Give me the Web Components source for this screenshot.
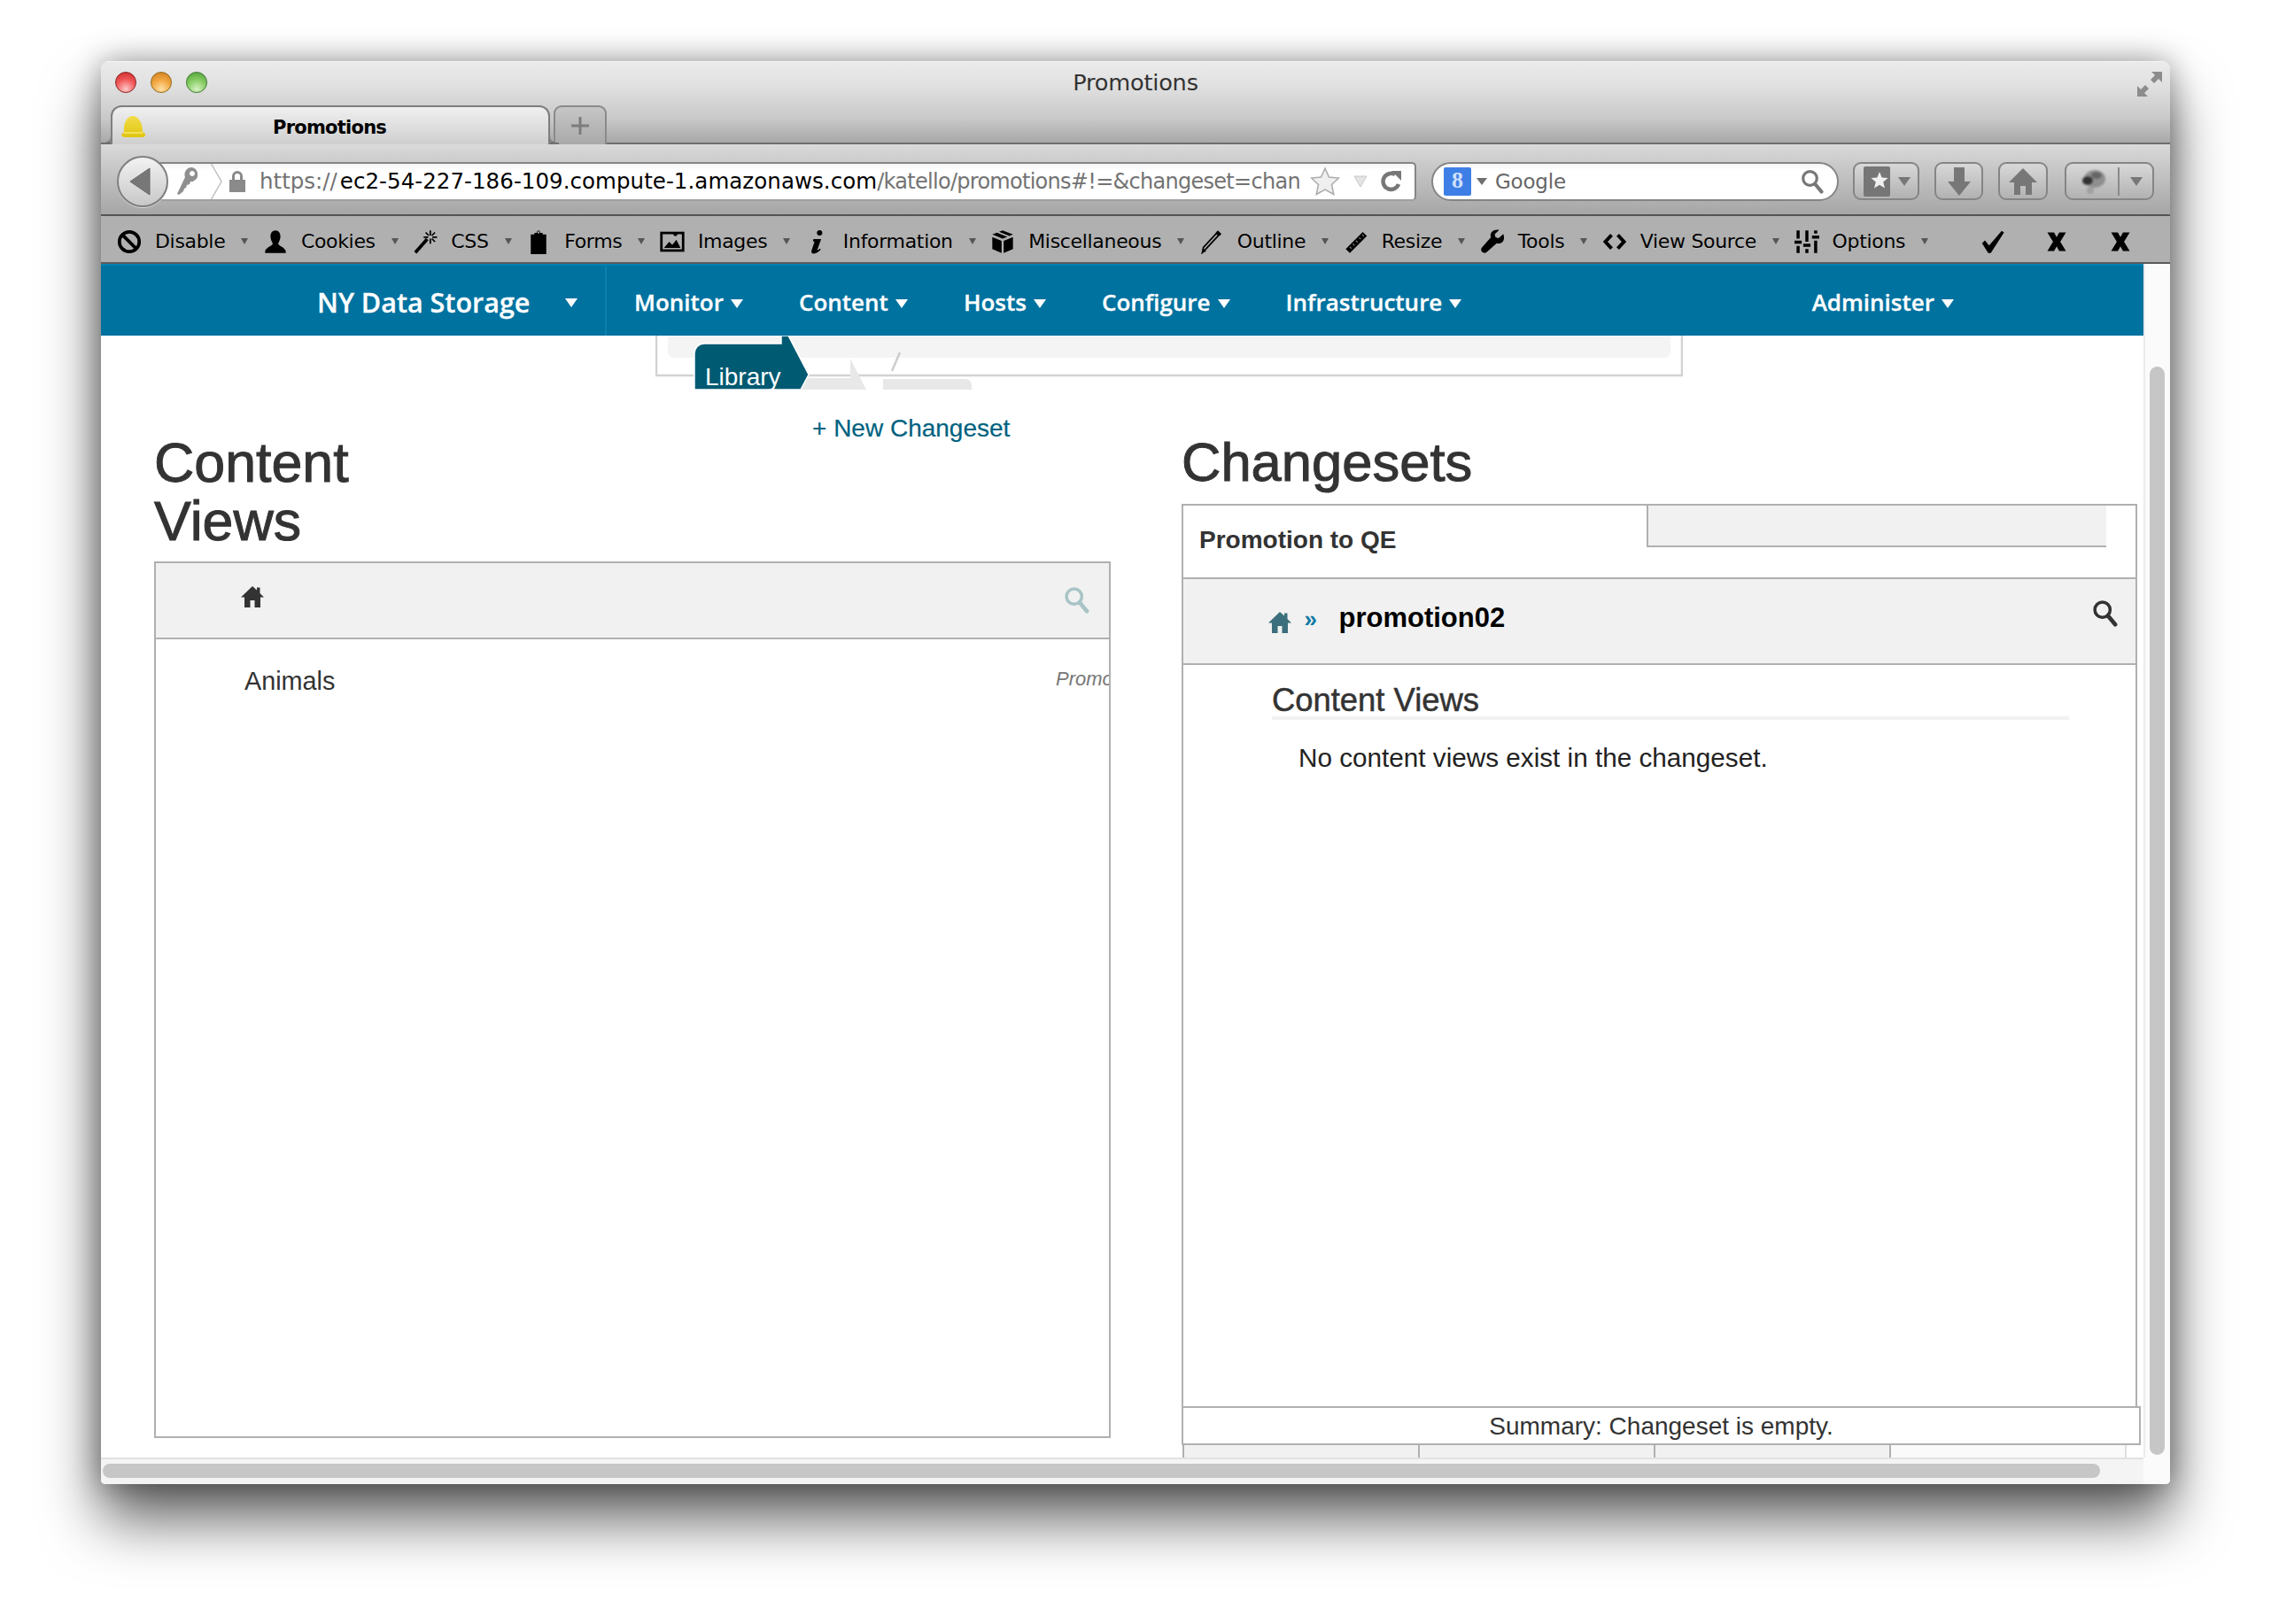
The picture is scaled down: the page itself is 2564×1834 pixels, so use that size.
<!DOCTYPE html>
<html><head><meta charset="utf-8"><title>Promotions</title>
<style>
html,body{margin:0;padding:0;background:#fff;width:2564px;height:1834px;overflow:hidden}
body{font-family:"Liberation Sans",Arial,sans-serif}
</style></head><body>
<mac-window>
  <title-bar></title-bar>
  <nav-toolbar></nav-toolbar>
  <dev-toolbar>
    <dev-item icon="disable">Disable</dev-item>
    <dev-item icon="person">Cookies</dev-item>
    <dev-item icon="wand">CSS</dev-item>
    <dev-item icon="clip">Forms</dev-item>
    <dev-item icon="image">Images</dev-item>
    <dev-item icon="info">Information</dev-item>
    <dev-item icon="box">Miscellaneous</dev-item>
    <dev-item icon="pencil">Outline</dev-item>
    <dev-item icon="ruler">Resize</dev-item>
    <dev-item icon="wrench">Tools</dev-item>
    <dev-item icon="code">View Source</dev-item>
    <dev-item icon="sliders">Options</dev-item>
  </dev-toolbar>
  <browser-viewport>
    <app-nav></app-nav>
    <env-path></env-path>
    <promo-layout>
      <content-panel slot="left"></content-panel>
      <changeset-panel slot="right"></changeset-panel>
    </promo-layout>
  </browser-viewport>
</mac-window>
<script>
const IC={
disable:'<circle cx="12" cy="12" r="9.6" fill="none" stroke="#000" stroke-width="3.2"/><path d="M5 5l14 14" stroke="#000" stroke-width="3.2"/>',
person:'<path d="M12 1c3.200 0 4.800 2.600 4.800 5.800 0 3-1.600 5.500-2.200 7 0 2.200 6.400 3.600 7.400 7.200v2H2v-2c1-3.600 7.400-5 7.400-7.200C8.800 12.300 7.200 9.800 7.200 6.800 7.200 3.600 8.800 1 12 1z"/>',
wand:'<path d="M2.500 22.500L14 9.500" stroke="#000" stroke-width="3.200" fill="none"/><path d="M17 1v5M17 9v5M10.500 7.500h4.500M19 7.500h4.500M12.500 3l3 3M21.500 3l-3 3M21.500 12l-3-3" stroke="#000" stroke-width="1.500" fill="none"/>',
clip:'<path fill-rule="evenodd" d="M4.500 5H8V3.500h2.300C10.500 1.800 11 1 12 1s1.500.8 1.700 2.500H16V5h3.500v19h-15zM11 3a1 1 0 1 0 2 0 1 1 0 0 0-2 0z"/>',
image:'<rect x="1.500" y="3.500" width="21" height="17" fill="none" stroke="#000" stroke-width="2.400"/><path d="M4 18l5-6 3 3 4-5 4 8zM15 6.500a2 2 0 1 1 .01 0z"/>',
info:'<circle cx="14" cy="3.500" r="2.600"/><path d="M8 9.500h7.500l-3.600 10c-.3 1 .6 1 2.400-.8l.9.9C12.800 22.400 10.500 23.500 8.500 23.500c-2 0-2.800-1.300-2.300-3l2.900-8.500-1.500-.5z"/>',
box:'<path d="M12 1l10 4-3.500 1.500L8.500 2.400zM6.500 3.200L16.500 7.300 12 9 2 5zM2 7.500l9 3.700V23l-9-4zM22 7.500l-9 3.700V23l9-4z"/>',
pencil:'<path d="M19 5.500L6.500 19 3 22.500l1-5L16.500 4z" fill="none" stroke="#000" stroke-width="1.500"/><path d="M18 1l3.500 3.500-2 2L16 3zM3 22.500l.8-4 3 3z"/>',
ruler:'<path d="M18.500 2.500l4 4L6 23l-4-4z"/><path d="M6 17l1.500 1.500M9 14l1.500 1.500M12 11l1.500 1.500M15 8l1.500 1.500M18 5l1.500 1.500" stroke="#888" stroke-width="1"/>',
wrench:'<path d="M22.500 4.500l-4.500 4-3-.8-.8-3 4.300-4C15.500 0 12.500.8 11 3c-1 1.500-1.100 3.200-.5 4.800L1.800 17.500c-1.100 1.300-1 3.200.2 4.400 1.200 1.200 3.100 1.300 4.400.2l9.700-8.700c1.600.6 3.300.5 4.800-.5 2.200-1.500 3-4.500 1.600-8.400z"/>',
code:'<path d="M9 5.500L3 12l6 6.500M15 5.500l6 6.500-6 6.500" fill="none" stroke="#000" stroke-width="3.400"/>',
sliders:'<path d="M2 1h3v8H2zM0 11h7v3H0zM2 16h3v7H2zM10.500 1h3v11h-3zM8.500 14h7v3h-7zM10.500 19h3v4h-3zM19 1h3v3h-3zM17 6h7v3h-7zM19 11h3v12h-3z"/>'
};
const SEARCH=(c,w=26,h=28)=>`<svg width="${w}" height="${h}" viewBox="0 0 26 28"><circle cx="10.500" cy="10.500" r="7.800" fill="none" stroke="${c}" stroke-width="3.200"/><path d="M16 16.500l7.500 9" stroke="${c}" stroke-width="4.200" stroke-linecap="round"/></svg>`;
const HOME=(c,w=28,h=26)=>`<svg width="${w}" height="${h}" viewBox="0 0 28 26"><path fill="${c}" d="M14 1L1 13.500h4V25h6.500v-8h5v8H23V13.500h4L22.500 9V2.500H19v3z"/></svg>`;
function def(name,html){customElements.define(name,class extends HTMLElement{constructor(){super();this.attachShadow({mode:'open'}).innerHTML=html}})}

def('mac-window',`<style>
:host{display:flex;flex-direction:column;width:2336px;height:1607px;margin:69px 0 0 114px;border-radius:9px 9px 5px 5px;background:#fff;box-shadow:0 40px 66px rgba(0,0,0,.62),0 0 34px rgba(0,0,0,.36);overflow:hidden;position:relative}
</style><slot></slot>`);

def('title-bar',`<style>
:host{display:block;height:94px;box-sizing:border-box;background:linear-gradient(#ebebeb,#e0e0e0 30%,#c9c9c9 70%,#a8a8a8);border-top:1px solid #f6f6f6;border-bottom:2px solid #6e6e6e;font-family:"DejaVu Sans",sans-serif}
.row{display:grid;grid-template-columns:1fr auto 1fr;align-items:center;height:49px}
.lights{display:flex;gap:16px;padding-left:16px;padding-bottom:3px}
.l{width:24px;height:24px;border-radius:50%;box-sizing:border-box}
.r{background:radial-gradient(circle at 50% 85%,#ffc9c9,#f25a5a 50%,#c42626);border:1px solid #8a2626}
.o{background:radial-gradient(circle at 50% 85%,#ffe0a6,#f2a640 50%,#c77a18);border:1px solid #8f6a20}
.g{background:radial-gradient(circle at 50% 85%,#d8f2c4,#86cc62 50%,#4d9a38);border:1px solid #3f7a30}
.t{font-size:25.600px;color:#333;letter-spacing:-.2px;padding-bottom:3px}
.e{justify-self:end;padding-right:8px;display:flex}
.tabs{display:flex;height:44px;padding-left:11px;gap:4px;margin-bottom:-2px}
.tab{position:relative;width:496px;height:46px;box-sizing:border-box;background:linear-gradient(#f0f0f0,#cdcdcd);border:2px solid #7e7e7e;border-bottom:0;border-radius:12px 12px 0 0;display:flex;align-items:center}
.tab::before,.tab::after{content:"";position:absolute;bottom:2px;width:10px;height:14px;border-bottom:2px solid #6e6e6e}
.tab::before{left:-12px;border-right:2px solid #7e7e7e;border-bottom-right-radius:9px}
.tab::after{right:-12px;border-left:2px solid #7e7e7e;border-bottom-left-radius:9px}
.tab b{position:absolute;left:181px;top:9px;font-size:21px;letter-spacing:-.75px;color:#000;line-height:28px}
.fav{margin-left:9px;display:flex}
.plus{width:60px;height:44px;box-sizing:border-box;background:linear-gradient(#c6c6c6,#a9a9a9);border:2px solid #8a8a8a;border-bottom:0;border-radius:9px 9px 0 0;display:flex;align-items:center;justify-content:center}
</style>
<div class="row"><div class="lights"><div class="l r"></div><div class="l o"></div><div class="l g"></div></div>
<div class="t">Promotions</div>
<div class="e"><svg width="30" height="30" viewBox="0 0 30 30" fill="#8c8c8c"><path d="M29 1v12l-4-4-5 5-4-4 5-5-4-4zM1 29V17l4 4 5-5 4 4-5 5 4 4z"/></svg></div></div>
<div class="tabs"><div class="tab"><div class="fav"><svg width="30" height="28" viewBox="0 0 30 28"><defs><linearGradient id="h" x1="0" y1="0" x2="0" y2="1"><stop offset="0" stop-color="#f2dc4a"/><stop offset="1" stop-color="#e0c510"/></linearGradient></defs><path fill="url(#h)" d="M4 20C3 9 8 2 14 2s11 7 11 18l3 2c1 1-1 4-3 4H5c-3 0-5-3-3-4z"/><path d="M4 21h21" stroke="#f7e96e" stroke-width="1.500"/></svg></div><b>Promotions</b></div>
<div class="plus"><svg width="22" height="22" viewBox="0 0 22 22"><path d="M9.500 1h3v8.500H21v3h-8.500V21h-3v-8.500H1v-3h8.500z" fill="#7c7c7c"/></svg></div></div>`);

def('nav-toolbar',`<style>
:host{display:flex;align-items:center;height:81px;box-sizing:border-box;padding:4px 19px 0 18px;background:linear-gradient(#dadada,#c9c9c9 30%,#a6a6a6);border-bottom:2px solid #555;font-family:"DejaVu Sans",sans-serif;color:#666;position:relative}
.back{flex:none;width:58px;height:58px;border-radius:50%;box-sizing:border-box;border:2px solid #808080;background:linear-gradient(#f2f2f2,#c8c8c8);display:flex;align-items:center;justify-content:center;padding-right:6px;position:relative;z-index:2;box-shadow:0 1px 0 #ddd}
.url{flex:none;width:1438px;height:44px;box-sizing:border-box;margin-left:-29px;border:2px solid #858585;border-left:0;border-bottom-color:#a0a0a0;border-radius:0 5px 5px 0;background:linear-gradient(#f4f4f4,#fff 20%);display:flex;align-items:center;overflow:hidden}
.key{flex:none;width:63px;margin-left:27px;display:flex;height:100%;align-items:center;justify-content:space-between;padding-left:11px;box-sizing:border-box}
.lock{flex:none;margin-left:7px;width:20px;display:flex}
.text{flex:none;width:1174px;margin-left:15px;overflow:hidden;white-space:nowrap;font-size:24.500px;letter-spacing:0;color:#737373;line-height:40px}
.text b{font-weight:normal;color:#000;letter-spacing:.05px;margin-left:3px}
.text u{text-decoration:none;font-size:24px;letter-spacing:-.72px}
.tools{flex:none;display:flex;align-items:center;margin-left:12px;gap:16px}
.search{flex:none;width:460px;height:44px;box-sizing:border-box;margin-left:17px;border:2px solid #858585;border-radius:22px;background:linear-gradient(#f4f4f4,#fff 20%);display:flex;align-items:center;padding-left:12px}
.g{flex:none;width:31px;height:32px;background:#3e7fe6;color:#cfe0fb;border-radius:2px;font:bold 26px "Liberation Serif",serif;text-align:center;line-height:30px}
.tri{flex:none;width:0;height:0;border:6px solid transparent;border-top:8px solid #6e6e6e;border-bottom:0}
.gl{flex:1;font-size:23px;color:#666;margin-left:9px;letter-spacing:-.2px}
.mag{flex:none;margin-right:15px;display:flex}
.btn{flex:none;height:43px;box-sizing:border-box;border:2px solid #858585;border-radius:9px;background:linear-gradient(#d8d8d8,#b2b2b2);display:flex;align-items:center;justify-content:center}
.b1{width:75px;margin-left:16px;gap:8px}.b2{width:55px;margin-left:17px}.b3{width:56px;margin-left:17px}.b4{width:101px;margin-left:19px;gap:12px}
.div{width:2px;height:32px;background:#8a8a8a}
</style>
<div class="back"><svg width="26" height="34" viewBox="0 0 26 34"><path d="M24 2v30L2 17z" fill="#777" stroke="#666" stroke-width="1"/></svg></div>
<div class="url">
  <div class="key"><svg width="26" height="36" viewBox="0 0 26 36"><path fill="#8f8f8f" fill-rule="evenodd" d="M17 2a8 8 0 0 1 3 15l-1 1-3 0-1 3-3 1-1 3-2 1-1 3-5 4-2-1 9-19a8 8 0 0 1 7-11zm1 4a3 3 0 1 0 .01 0z"/></svg>
  <svg width="14" height="42" viewBox="0 0 14 42"><path d="M1 0l12 21L1 42" fill="none" stroke="#c2c2c2" stroke-width="1.500"/></svg></div>
  <div class="lock"><svg width="20" height="26" viewBox="0 0 20 26"><path fill="#8a8a8a" fill-rule="evenodd" d="M4 11V7a6 6 0 0 1 12 0v4h3v14H1V11zm3 0h6V7a3 3 0 0 0-6 0z"/></svg></div>
  <div class="text">https://<b>ec2-54-227-186-109.compute-1.amazonaws.com</b><u>/katello/promotions#!=&amp;changeset=changeset_1</u></div>
  <div class="tools"><svg width="34" height="34" viewBox="0 0 34 34"><path d="M17 2l4.500 10 11 1-8 7.500 2.300 11L17 26l-9.800 5.500 2.300-11-8-7.500 11-1z" fill="#efefef" stroke="#aaa" stroke-width="1.500"/></svg>
  <svg width="16" height="14" viewBox="0 0 16 14" style="margin-left:-1px"><path d="M1 1h14L8 13z" fill="#e4e4e4" stroke="#c8c8c8"/></svg>
  <svg width="24" height="26" viewBox="0 0 24 26" style="margin-left:-1px"><path d="M20 16a9 9 0 1 1-4-11" fill="none" stroke="#777" stroke-width="4.500"/><path d="M12 1h11v11z" fill="#777"/></svg></div>
</div>
<div class="search"><div class="g">8</div><div class="tri" style="margin-left:6px"></div><div class="gl">Google</div><div class="mag">${SEARCH('#777')}</div></div>
<div class="btn b1"><svg width="32" height="36" viewBox="0 0 32 36"><rect x="1" y="1" width="30" height="34" rx="2" fill="#767676"/><path d="M19 7l2.600 6.500 7 .5-5.400 4.500 1.800 7L19 21.800 13 25.500l1.800-7L9.400 14l7-.5z" fill="#f0f0f0"/></svg><div class="tri" style="border-top-color:#777;border-width:10px 7px 0"></div></div>
<div class="btn b2"><svg width="28" height="34" viewBox="0 0 28 34"><path d="M8 1h12v16h7L14 33 1 17h7z" fill="#777"/></svg></div>
<div class="btn b3"><svg width="34" height="32" viewBox="0 0 34 32"><path d="M17 1L1 17h6v14h7V21h6v10h7V17h6z" fill="#777"/></svg></div>
<div class="btn b4"><svg width="34" height="36" viewBox="0 0 34 36"><defs><filter id="bl"><feGaussianBlur stdDeviation="1.100"/></filter></defs><g filter="url(#bl)"><ellipse cx="20" cy="15" rx="12" ry="10" fill="#8f8f8f"/><ellipse cx="12" cy="17" rx="6" ry="5" fill="#333"/><ellipse cx="22" cy="11" rx="6" ry="4" fill="#666"/><ellipse cx="15" cy="28" rx="4" ry="4" fill="#a0a0a0"/></g></svg><div class="div"></div><div class="tri" style="border-top-color:#777;border-width:10px 7px 0"></div></div>`);

def('dev-toolbar',`<style>
:host{display:flex;align-items:center;height:54px;box-sizing:border-box;padding:5px 0 0 17px;gap:15.500px;background:#b0b0b0;border-bottom:2px solid #5a5a5a;font-family:"DejaVu Sans",sans-serif;color:#000;position:relative}
.end{display:flex;gap:44px;margin-left:43px;align-items:center}
svg{width:28px;height:28px;display:block}
</style><slot></slot><div class="end">
<svg viewBox="0 0 24 24"><path d="M1.500 13.500l2.800-2.800 4 5L20.500 1.500l2.300 1.500L10 23H7.500z"/></svg>
<svg viewBox="0 0 24 24"><path d="M3 3h6.500L12 7.500 14.500 3H21l-5.500 9L21 21h-6.500L12 16.500 9.500 21H3l5.500-9z"/></svg>
<svg viewBox="0 0 24 24"><path d="M3 3h6.500L12 7.500 14.500 3H21l-5.500 9L21 21h-6.500L12 16.500 9.500 21H3l5.500-9z"/></svg>
</div>`);

customElements.define('dev-item',class extends HTMLElement{
 constructor(){super();this.attachShadow({mode:'open'})}
 connectedCallback(){this.shadowRoot.innerHTML=`<style>
 :host{display:flex;align-items:center;flex:none;font-size:22px;letter-spacing:-.32px;line-height:30px;color:#000;text-shadow:0 1px 0 rgba(255,255,255,.25)}
 .i{flex:none;width:30px;height:28px;display:flex;justify-content:center;margin-right:14px}
 svg{height:28px;width:28px;display:block}
 .c{flex:none;margin-left:18px;width:0;height:0;border:4.500px solid transparent;border-top:7px solid #555;border-bottom:0}
 </style><span class="i"><svg viewBox="0 0 24 24">${IC[this.getAttribute('icon')]}</svg></span><slot></slot><span class="c"></span>`}
});

def('browser-viewport',`<style>
:host{display:grid;grid-template-columns:2306px 30px;grid-template-rows:1348px 30px;height:1378px;background:#fff}
.main{overflow:hidden;background:#fff;min-width:0;min-height:0}
.v{background:#fbfbfb;border-left:2px solid #ebebeb;box-sizing:border-box;padding:116px 0 0 5px}
.vt{width:17px;height:1229px;background:#c6c6c6;border-radius:9px}
.h{background:#f4f4f4;border-top:2px solid #e2e2e2;box-sizing:border-box;padding:5px 0 0 2px}
.ht{width:2255px;height:16px;background:#c6c6c6;border-radius:8px}
.c{background:#fbfbfb}
</style><div class="main"><slot></slot></div><div class="v"><div class="vt"></div></div><div class="h"><div class="ht"></div></div><div class="c"></div>`);

def('app-nav',`<style>
:host{display:flex;align-items:center;height:81px;box-sizing:border-box;background:#0072a0;border-top:2px solid #0082b2;font-family:"Open Sans",sans-serif;font-weight:600;color:#fff;font-size:26px;padding-right:214px;-webkit-text-stroke:.3px #fff}
.brand{flex:none;display:flex;align-items:center;height:100%;box-sizing:border-box;width:571px;padding:2px 0 0 244px;border-right:2px solid #0a80ad;font-size:30.500px}
.brand i{margin-left:40px}
span.n{flex:none;display:flex;align-items:center;margin-left:63px;padding-top:3px;white-space:nowrap}
span.n:first-of-type{margin-left:31px}
i{display:block;flex:none;width:0;height:0;border:7px solid transparent;border-top:10px solid #fff;border-bottom:0;margin-left:8px;margin-top:3px}
.sp{flex:1}
</style><div class="brand">NY Data Storage<i></i></div>
<span class="n">Monitor<i></i></span><span class="n">Content<i></i></span><span class="n">Hosts<i></i></span><span class="n">Configure<i></i></span><span class="n">Infrastructure<i></i></span><div class="sp"></div><span class="n">Administer<i></i></span>`);

def('env-path',`<style>
:host{display:block;height:61px;margin-left:626px;width:1160px}
svg{display:block}
text{font-family:"Liberation Sans",Arial,sans-serif;font-size:28px;fill:#fff}
</style><svg width="1160" height="61" viewBox="0 0 1160 61">
<rect x="1" y="-10" width="1158" height="55" fill="#fff" stroke="#d2d2d2" stroke-width="2.500"/>
<path d="M14 0h1132v18a7 7 0 0 1-7 7H21a7 7 0 0 1-7-7z" fill="#f4f4f4"/>
<path d="M160 48h60V46l0-20 18 35h-78z" fill="#e8e8e8"/>
<path d="M257 61V49h93a7 7 0 0 1 7 7v5z" fill="#e8e8e8"/>
<path d="M276 19l-9 21" stroke="#ccc" stroke-width="2.500"/>
<path d="M44 61V20a11 11 0 0 1 11-11h87V0h8l23 44-9 17z" fill="#005a72" stroke="#fff" stroke-width="1.500"/>
<text x="56" y="56">Library</text></svg>`);

def('promo-layout',`<style>
:host{display:flex;padding:27px 0 0 60px;gap:80px}
.c{flex:none;width:1080px}
</style><div class="c"><slot name="left"></slot></div><div class="c"><slot name="right"></slot></div>`);

const H1='line-height:65px;font-weight:normal;color:#333;margin:0;-webkit-text-stroke:1px #333';
def('content-panel',`<style>
:host{display:block;color:#333}
.top{display:flex;align-items:flex-start;height:167px}
h1{${H1};font-size:62.700px;margin-top:22px;line-height:66px;width:300px;flex:none}
a{flex:none;margin-left:443px;font-size:28px;line-height:34px;color:#00627f;white-space:nowrap;-webkit-text-stroke:.2px #00627f}
.box{width:1080px;height:990px;box-sizing:border-box;border:2px solid #b0b0b0}
.bar{height:86px;box-sizing:border-box;background:#f1f1f1;border-bottom:2px solid #b0b0b0;display:flex;justify-content:space-between;align-items:flex-start;padding:25px 22px 0 95px}
.row{display:flex;overflow:hidden;white-space:nowrap;padding:30px 0 0 100px}
.nm{flex:none;width:916px;font-size:28.800px;line-height:34px}
.st{flex:none;font-style:italic;font-size:22px;line-height:30px;color:#777}
</style><div class="top"><h1>Content Views</h1><a>+ New Changeset</a></div>
<div class="box"><div class="bar">${HOME('#333')}<span style="display:flex;margin-top:1px">${SEARCH('#a9c4c6',29,31)}</span></div>
<div class="row"><span class="nm">Animals</span><span class="st">Promotion</span></div></div>`);

def('changeset-panel',`<style>
:host{display:block;color:#333}
h1{${H1};font-size:61.500px;margin-top:22px;margin-bottom:15px}
.box{width:1079px;height:1020px;box-sizing:border-box;border:2px solid #b0b0b0;border-bottom:0}
.hd{height:81px;display:flex;box-sizing:content-box;border-bottom:2px solid #b0b0b0}
.hd b{flex:1;padding:22px 0 0 18px;font-size:28px;line-height:34px}
.in{flex:none;width:519px;height:47px;box-sizing:border-box;background:#f1f1f1;border:2px solid #b0b0b0;border-width:0 0 2px 2px;margin-right:33px}
.crumb{height:97px;box-sizing:border-box;background:#f1f1f1;border-bottom:2px solid #b0b0b0;display:flex;align-items:flex-start;padding-left:95px}
.ho{flex:none;display:flex;margin-top:36px}
.ra{flex:none;font-size:26px;line-height:30px;color:#0f7ba3;margin:30px 0 0 13.500px;font-weight:bold}
.cs{flex:1;font-weight:bold;font-size:31px;line-height:36px;color:#000;margin:26px 0 0 24.500px}
.se{flex:none;margin:22.500px 20.500px 0 0;display:flex}
.bd{padding:22px 0 0 100px}
h2{font-size:36.400px;line-height:36px;font-weight:normal;margin:0;width:900px;height:36px;border-bottom:4px solid #f2f2f2;-webkit-text-stroke:.5px #333}
p{margin:26px 0 0 30px;font-size:29.700px;line-height:34px;color:#222}
.sum{width:1083px;height:44px;box-sizing:border-box;border:2px solid #b0b0b0;background:#fff;margin-top:-1px;position:relative;text-align:center;font-size:28px;line-height:42px}
.cells{display:flex;height:40px;margin-left:1px;border-left:2px solid #b0b0b0;box-sizing:border-box;width:1066px}
.cells div{flex:none;width:266px;box-sizing:border-box;background:#f1f1f1;border-right:2px solid #b0b0b0}
.cells div:last-child{background:#fafafa;border-right-color:#dedede}
</style><h1>Changesets</h1><div class="box">
<div class="hd"><b>Promotion to QE</b><div class="in"></div></div>
<div class="crumb"><span class="ho">${HOME('#3b6f7b')}</span><span class="ra">»</span><span class="cs">promotion02</span><span class="se">${SEARCH('#333',29,31)}</span></div>
<div class="bd"><h2>Content Views</h2><p>No content views exist in the changeset.</p></div></div>
<div class="sum">Summary: Changeset is empty.</div>
<div class="cells"><div></div><div></div><div></div><div></div></div>`);
</script>
</body></html>
